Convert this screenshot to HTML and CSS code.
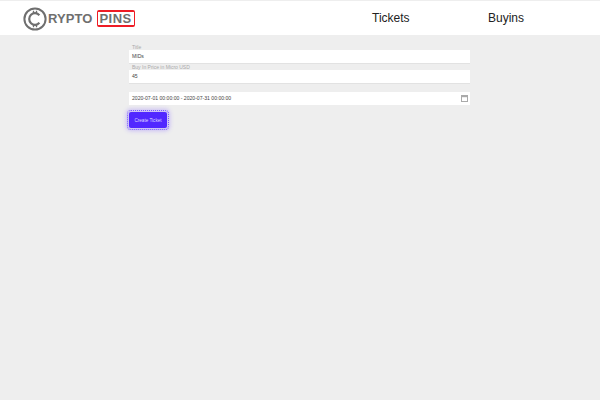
FILE: index.html
```html
<!DOCTYPE html>
<html lang="en">
<head>
<meta charset="utf-8">
<title>Crypto Pins</title>
<link rel="stylesheet" href="styles.css">
</head>
<body>
<header class="topbar">
  <div class="logo">
    <svg class="logo-mark" width="24" height="24" viewBox="0 0 24 24" aria-hidden="true">
      <circle cx="12" cy="12" r="10.6" fill="none" stroke="#6f6f6f" stroke-width="2"/>
      <path d="M16.4 8.2A5.8 5.8 0 1 0 16.4 15.8" fill="none" stroke="#6f6f6f" stroke-width="2.2"/>
      <path d="M10.5 3.8V7M13.5 3.8V7M10.5 17V20.2M13.5 17V20.2" stroke="#6f6f6f" stroke-width="1.3"/>
    </svg>
    <span class="logo-word">RYPTO</span>
    <span class="logo-box">PINS</span>
  </div>
  <nav class="nav">
    <a class="nav-link nav-tickets">Tickets</a>
    <a class="nav-link">Buyins</a>
  </nav>
</header>
<main class="form">
  <label class="label">Title</label>
  <div class="field">MIDs</div>
  <label class="label">Buy In Price in Micro USD</label>
  <div class="field">45</div>
  <div class="field date">
    <span>2020-07-01 00:00:00 - 2020-07-31 00:00:00</span>
    <svg class="cal" width="7" height="7" viewBox="0 0 7 7" aria-hidden="true">
      <rect x=".5" y=".5" width="6" height="6" fill="#fff" stroke="#aaa"/>
      <rect x="0" y="0" width="7" height="2.2" fill="#aaa"/>
    </svg>
  </div>
  <button class="submit">Create Ticket</button>
</main>
</body>
</html>
```
FILE: styles.css
```css
* { box-sizing: border-box; }
html, body { margin: 0; height: 100%; }
body {
  background: #eeeeee;
  font-family: "Liberation Sans", Arial, sans-serif;
  color: #333;
}
.topbar {
  height: 35px;
  background: #fff;
  border-top: 1px solid #eee;
  display: flex;
  align-items: center;
  padding-left: 23px;
}
.logo { display: flex; align-items: center; width: 349px; }
.logo-mark { flex: none; margin-top: 2px; }
.logo-word {
  font-size: 13px;
  font-weight: 700;
  color: #6f6f6f;
  letter-spacing: .1px;
  margin-left: 1px;
}
.logo-box {
  font-size: 13px;
  font-weight: 700;
  color: #6f6f6f;
  letter-spacing: .5px;
  margin-left: 4px;
  width: 38px;
  height: 17px;
  justify-content: center;
  border: solid #ee1c25;
  border-width: 2px 1px;
  border-radius: 2px;
  display: flex;
  align-items: center;
}
.nav { display: flex; }
.nav-link { font-size: 12px; color: #222; line-height: 16px; }
.nav-tickets { width: 116px; }
.form {
  width: 341px;
  margin: 10px 0 0 129px;
  display: flex;
  flex-direction: column;
}
.label {
  font-size: 5px;
  line-height: 5px;
  color: #aaa;
  padding-left: 3px;
}
.field {
  height: 14px;
  background: #fff;
  border-bottom: 1px solid #e2e2e2;
  font-size: 5.1px;
  line-height: 13px;
  color: #444;
  padding: 0 3px;
  margin-bottom: 1px;
}
.date {
  margin: 7px 0 7px;
  height: 13px;
  display: flex;
  justify-content: space-between;
  align-items: center;
  padding-right: 2px;
  border-bottom: 0;
}
.cal { flex: none; }
.submit {
  align-self: flex-start;
  width: 38px;
  height: 16px;
  padding: 0;
  background: #5128ff;
  color: #ddd6ff;
  border: 0;
  border-radius: 2px;
  outline: 1px dotted #7a5cff;
  outline-offset: 1px;
  box-shadow: 0 0 4px 3px #c9bdf5;
  font: 4.6px "Liberation Sans", Arial, sans-serif;
}
```
